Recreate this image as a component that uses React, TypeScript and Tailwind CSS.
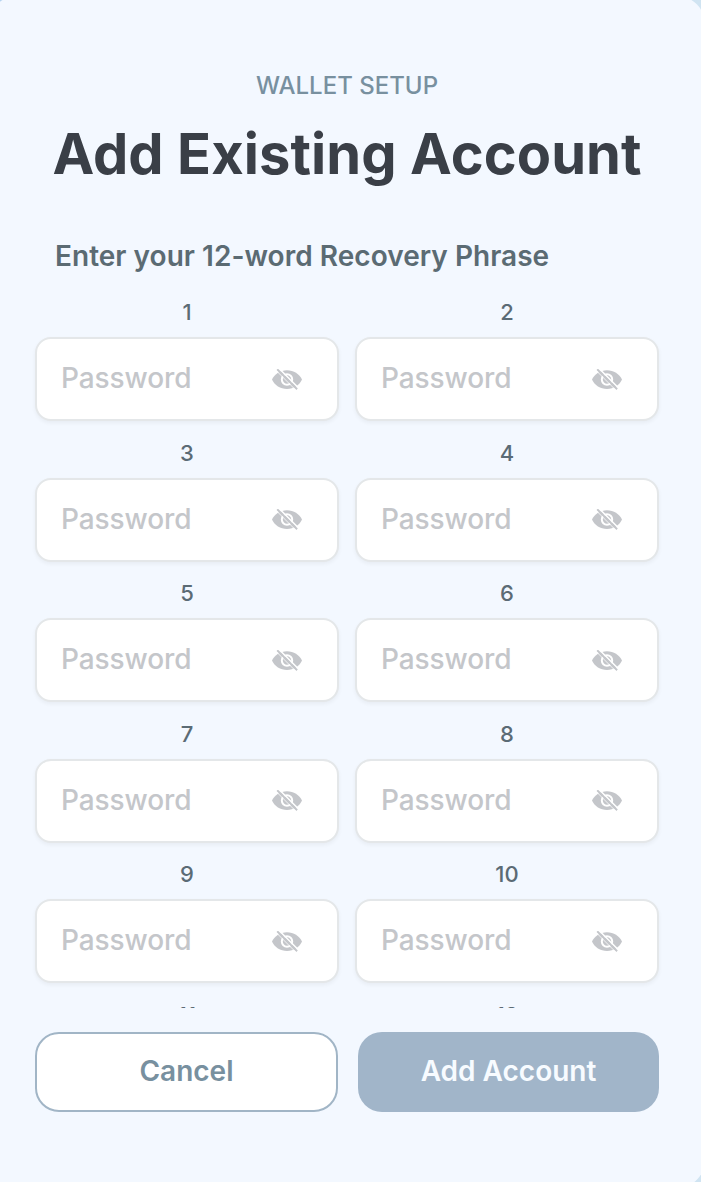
const HiddenEyeIcon = () => (
  <svg width="30" height="22" viewBox="0 0 30 22" fill="none" aria-hidden="true">
    <path
      d="M15 1.200C8.300 1.200 2.600 5 0 10.500C2.600 16.200 8.300 20 15 20s12.400-3.800 15-9.500C27.400 5 21.700 1.200 15 1.200Z"
      fill="#c4c6ca"
    />
    <circle cx="15" cy="10.500" r="5.200" fill="#c4c6ca" stroke="#fff" strokeWidth="2" />
    <path d="M6.800 -0.700L26.800 19.300" stroke="#fff" strokeWidth="1.600" />
    <path d="M5.200 0.300L25.100 20.200" stroke="#c4c6ca" strokeWidth="2" />
    <path d="M3.900 1.300L23.900 21.300" stroke="#fff" strokeWidth="0.800" />
  </svg>
);

const WordField = ({ index }: { index: number }) => (
  <div className="pb-[0.500px]">
    <div className="flex h-14 items-center justify-center pt-1.5 text-[22px] leading-7 font-medium text-[#5b6b75]">
      {index}
    </div>
    <div className="flex h-[84px] items-center justify-between rounded-2xl border-2 border-[#e4e7e9] bg-white pt-px pr-[35px] pl-6 shadow-[0_2px_4px_rgba(0,0,0,0.05)]">
      <span className="pb-[3px] text-[28px] leading-9 font-[450] tracking-[-0.080px] text-[#c4c6ca]">Password</span>
      <HiddenEyeIcon />
    </div>
  </div>
);

const words = Array.from({ length: 12 }, (_, i) => i + 1);

export default function App() {
  return (
    <div className="h-[1182px] w-[701px] overflow-hidden bg-linear-to-r from-[#b5d4f0] to-[#d0e4f2] font-['Inter',sans-serif]">
      <main className="-mt-1 -ml-[11px] flex h-[1192px] w-[716px] flex-col rounded-[28px] bg-[#f3f8ff] pt-1 pr-[46px] pl-[46px]">
        <header className="h-[281px] shrink-0 pt-[70px]">
          <p className="text-center text-2xl leading-8 font-medium text-[#78909f]">WALLET SETUP</p>
          <h1 className="mt-4 text-center text-[56px] leading-[72px] font-bold tracking-[0.080px] whitespace-nowrap text-[#3a3f47]">
            Add Existing Account
          </h1>
          <h2 className="mt-12 pl-5 text-[28px] leading-9 font-semibold tracking-[0.030px] text-[#5b6b73]">
            Enter your 12-word Recovery Phrase
          </h2>
        </header>
        <section className="-mx-2 grid h-[727px] shrink-0 grid-cols-2 content-start gap-x-4 overflow-hidden px-2">
          {words.map((word) => (
            <WordField key={word} index={word} />
          ))}
        </section>
        <footer className="mt-6 flex h-20 shrink-0 gap-5 text-[28px] font-semibold">
          <button className="w-[303px] rounded-3xl border-2 border-[#a1b5c6] bg-white pb-0.5 text-[#78909f]">
            Cancel
          </button>
          <button className="w-[301px] rounded-3xl bg-[#a1b5c9] pb-0.5 text-[#f7fbff]">Add Account</button>
        </footer>
      </main>
    </div>
  );
}
